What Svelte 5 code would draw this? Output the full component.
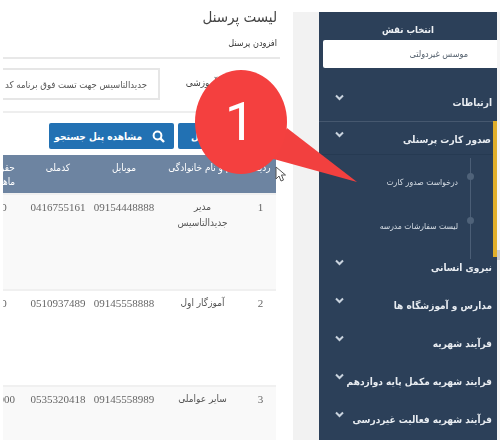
<script lang="ts">
  const rows = [
    { n: "1", name: "مدیر جدیدالتاسیس", mobile: "09154448888", code: "0416755161", pay: "0" },
    { n: "2", name: "آموزگار اول", mobile: "09145558888", code: "0510937489", pay: "0" },
    { n: "3", name: "سایر عواملی", mobile: "09145558989", code: "0535320418", pay: "2000" },
  ];
  const before = ["ارتباطات"];
  const after = [
    "نیروی انسانی",
    "مدارس و آموزشگاه ها",
    "فرآیند شهریه",
    "فرایند شهریه مکمل پایه دوازدهم",
    "فرآیند شهریه فعالیت غیردرسی",
  ];
</script>

{#snippet chevron()}
  <svg class="chev" width="9" height="7" viewBox="0 0 9 7" aria-hidden="true">
    <path d="M1 1.5 4.5 5 8 1.5" fill="none" stroke="#c9d3de" stroke-width="2" />
  </svg>
{/snippet}

<div class="page">
  <main class="main">
    <h1>لیست پرسنل</h1>
    <p class="add">افزودن پرسنل</p>
    <div class="unit">
      <label for="unit">واحد آموزشی</label>
      <div id="unit" class="input">جدیدالتاسیس جهت تست فوق برنامه کد</div>
    </div>
    <div class="actions">
      <button class="btn second">افزودن پرسنل</button>
      <button class="btn search">
        <svg width="13" height="13" viewBox="0 0 13 13" aria-hidden="true">
          <circle cx="5.5" cy="5.5" r="3.9" fill="none" stroke="#fff" stroke-width="2" />
          <path d="M8.4 8.4 12 12" stroke="#fff" stroke-width="2.4" />
        </svg>
        مشاهده پنل جستجو
      </button>
    </div>
    <div class="table-wrap">
      <table>
        <colgroup>
          <col style="width:31px" /><col style="width:85px" /><col style="width:72px" /><col style="width:60px" /><col style="width:48px" />
        </colgroup>
        <thead>
          <tr>
            <th>ردیف</th>
            <th class="nowrap">نام و نام خانوادگی</th>
            <th>موبایل</th>
            <th>کدملی</th>
            <th>حقوق<br />ماهانه</th>
          </tr>
        </thead>
        <tbody>
          {#each rows as r}
            <tr>
              <td class="num">{r.n}</td>
              <td>{r.name}</td>
              <td class="num">{r.mobile}</td>
              <td class="num">{r.code}</td>
              <td class="num">{r.pay}</td>
            </tr>
          {/each}
        </tbody>
      </table>
    </div>
  </main>

  <div class="gutter"></div>

  <nav class="side">
    <div class="role-title">انتخاب نقش</div>
    <div class="role">موسس غیردولتی</div>
    <ul class="menu">
      {#each before as item}
        <li class="item"><span>{item}</span>{@render chevron()}</li>
      {/each}
      <li class="open">
        <div class="item"><span>صدور کارت پرسنلی</span>{@render chevron()}</div>
        <ul class="sub">
          <li>درخواست صدور کارت</li>
          <li>لیست سفارشات مدرسه</li>
        </ul>
      </li>
      {#each after as item}
        <li class="item"><span>{item}</span>{@render chevron()}</li>
      {/each}
    </ul>
  </nav>
  <div class="scroll"></div>

  <svg class="callout" width="200" height="130" viewBox="0 0 200 130" aria-hidden="true">
    <path d="M95 58 165 112 78 88Z" fill="#f2403f" />
    <ellipse cx="49" cy="52" rx="46" ry="52" fill="#f4403f" />
    <text x="48" y="70" text-anchor="middle">1</text>
  </svg>
  <svg class="cursor" width="12" height="18" viewBox="0 0 12 18" aria-hidden="true">
    <path d="M1 1v12l3-3 2 5 2.500-1-2-5h4Z" fill="#fff" stroke="#555" />
  </svg>
</div>

<style>
  :global(body) {
    margin: 0;
    background: #fff;
  }

  .page {
    position: relative;
    display: flex;
    width: 500px;
    height: 440px;
    overflow: hidden;
    font-family: "DejaVu Sans Condensed", "DejaVu Sans", sans-serif;
    filter: blur(0.45px);
  }

  .main {
    width: 293px;
    flex: none;
    padding: 0 13px 0 3px;
    box-sizing: border-box;
    direction: rtl;
  }

  h1 {
    margin: 8px 3px 0 0;
    font-size: 15px;
    line-height: 18px;
    font-weight: 400;
    color: #444;
  }

  .add {
    margin: 0;
    padding: 11px 3px 8px 0;
    font-size: 9px;
    line-height: 12px;
    color: #333;
    border-bottom: 2px solid #e8e8e8;
  }

  .unit {
    display: flex;
    align-items: center;
    justify-content: space-between;
    height: 54px;
    box-sizing: border-box;
    border-bottom: 2px solid #eee;
  }

  label {
    margin: 0 43px 5px 0;
    font-size: 10px;
    color: #444;
  }

  .input {
    width: 157px;
    height: 32px;
    line-height: 29px;
    margin-bottom: 2px;
    box-sizing: border-box;
    padding-right: 11px;
    border: 2px solid #e6e6e6;
    border-left: 0;
    font-size: 9.500px;
    color: #555;
    white-space: nowrap;
    overflow: hidden;
  }

  .actions {
    display: flex;
    gap: 4px;
    margin-top: 10px;
    height: 26px;
  }

  .btn {
    display: flex;
    align-items: center;
    gap: 10px;
    border: 0;
    border-radius: 2px;
    background: #2271b3;
    color: #fff;
    font: bold 10px "DejaVu Sans Condensed", "DejaVu Sans", sans-serif;
    padding: 0;
    direction: rtl;
  }

  .second {
    width: 102px;
    padding-right: 24px;
    justify-content: flex-start;
    white-space: nowrap;
  }

  .search {
    width: 125px;
    padding-right: 9px;
    white-space: nowrap;
  }

  .table-wrap {
    margin: 6px 4px 0 0;
    width: 273px;
    overflow: hidden;
  }

  table {
    width: 296px;
    table-layout: fixed;
    border-collapse: collapse;
    direction: rtl;
  }

  th {
    height: 32px;
    padding: 6px 0 0;
    vertical-align: top;
    background: #6d84a1;
    color: #fff;
    font-size: 10px;
    font-weight: 400;
    line-height: 14px;
  }

  .nowrap {
    white-space: nowrap;
    overflow: hidden;
  }

  td {
    height: 90px;
    padding: 4px 8px 0;
    vertical-align: top;
    text-align: center;
    border-top: 2px solid #f0f0f0;
    font-size: 10px;
    line-height: 16px;
    color: #555;
    box-sizing: content-box;
  }

  td.num {
    padding: 4px 0 0;
    font: 11px/16px "Liberation Serif", serif;
    color: #666;
  }

  tbody tr:nth-child(odd) {
    background: #f9f9f9;
  }

  .gutter {
    width: 26px;
    flex: none;
    margin-top: 12px;
    background: #f2f2f2;
  }

  .side {
    width: 178px;
    flex: none;
    margin-top: 12px;
    background: #2c4059;
    direction: rtl;
    overflow: hidden;
    color: #fff;
  }

  .role-title {
    padding: 11px 63px 0 0;
    font-size: 9.500px;
    font-weight: 700;
    line-height: 14px;
    text-align: right;
    color: #eef1f5;
  }

  .role {
    height: 28px;
    margin: 3px 0 0 4px;
    padding-right: 29px;
    background: #fff;
    border-radius: 2px 0 0 2px;
    color: #54606d;
    font-size: 9px;
    line-height: 29px;
  }

  .menu,
  .sub {
    list-style: none;
    margin: 0;
    padding: 0;
  }

  .menu {
    margin-top: 15px;
  }

  .item {
    display: flex;
    justify-content: space-between;
    align-items: center;
    height: 38px;
    padding: 0 5px 0 0;
    font-size: 10px;
    font-weight: 700;
    color: #e8ecf1;
    white-space: nowrap;
  }

  .item span {
    margin-top: 1px;
  }

  .chev {
    flex: none;
    margin: -9px 0 0 16px;
  }

  .open {
    position: relative;
    border-top: 1px solid #46586f;
    height: 127px;
    box-sizing: border-box;
  }

  /* the accent bar runs a little past the open group */
  .open::after {
    content: "";
    position: absolute;
    top: -1px;
    right: 0;
    width: 4px;
    height: 136px;
    background: #e0ae2a;
  }

  .open > .item {
    height: 33px;
    padding: 2px 6px 0 0;
    box-sizing: border-box;
    border-bottom: 1px solid #263a52;
  }

  .sub {
    position: relative;
    padding-top: 16px;
  }

  .sub::before {
    content: "";
    position: absolute;
    top: 3px;
    bottom: 0;
    right: 26px;
    width: 1px;
    background: #4b5e76;
  }

  .sub li {
    position: relative;
    height: 44px;
    padding-right: 39px;
    font-size: 8.500px;
    line-height: 22px;
    color: #d6dde5;
    white-space: nowrap;
  }

  .sub li::before {
    content: "";
    position: absolute;
    top: 2px;
    right: 23px;
    width: 7px;
    height: 7px;
    border-radius: 50%;
    background: #4f6279;
  }

  .scroll {
    flex: 1;
    margin-top: 12px;
    background: linear-gradient(#f5f5f5 238px, #ccc 238px, #ccc 248px, #f5f5f5 248px);
  }

  /* annotation drawn over the screenshot */
  .callout {
    position: absolute;
    left: 192px;
    top: 70px;
    overflow: visible;
  }

  .callout text {
    font: 400 54px Roboto, sans-serif;
    fill: #fff;
  }

  .cursor {
    position: absolute;
    left: 275px;
    top: 166px;
  }
</style>
